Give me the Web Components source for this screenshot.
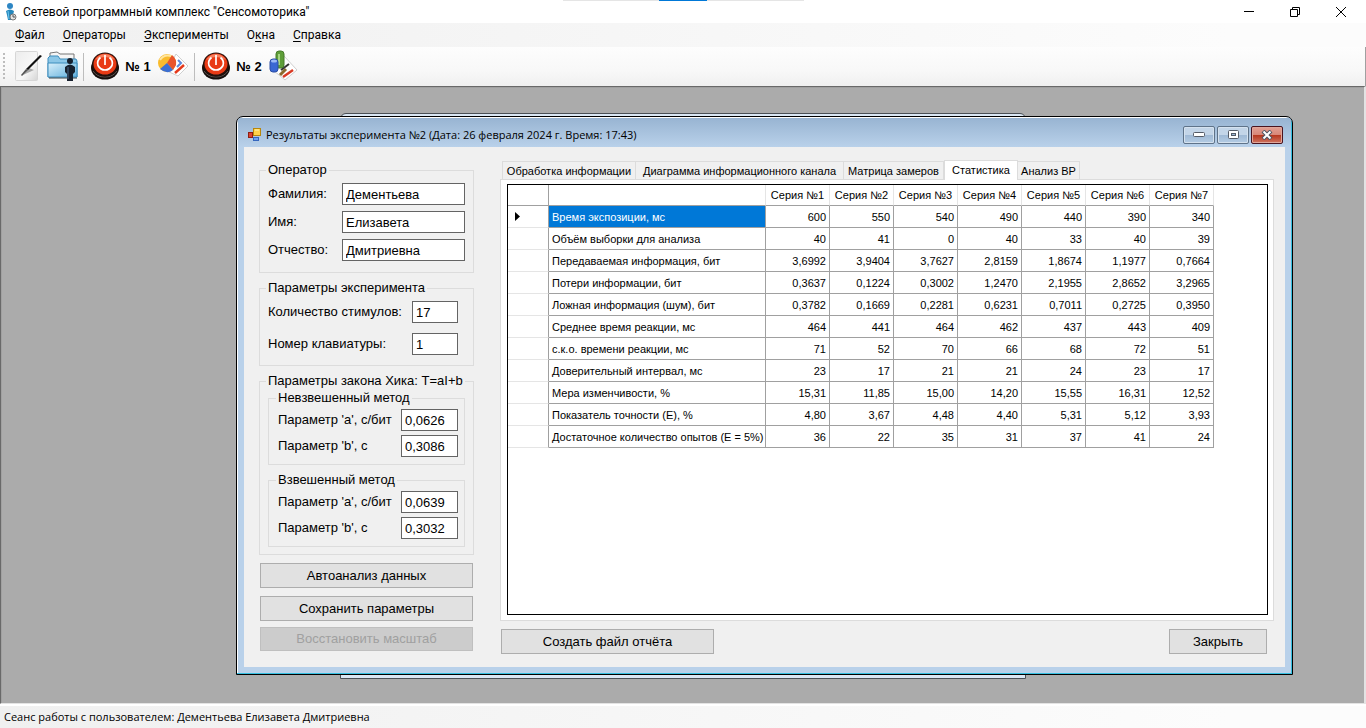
<!DOCTYPE html>
<html lang="ru">
<head>
<meta charset="utf-8">
<title>Сетевой программный комплекс "Сенсомоторика"</title>
<style>
html, body { margin: 0; height: 100%; }
body { font: 12px/16px Roboto, "Noto Sans", sans-serif; color: #000; background: #fff; }
</style>
</head>
<body>
<sm-app></sm-app>
<script>
const define = (name, html, setup) => {
  const template = document.createElement('template');
  template.innerHTML = html;
  customElements.define(name, class extends HTMLElement {
    constructor() {
      super();
      this.attachShadow({ mode: 'open' }).append(template.content.cloneNode(true));
    }
    connectedCallback() { if (setup) setup(this, this.shadowRoot); }
  });
};

define('sm-titlebar', `
<style>
:host { display: flex; align-items: center; height: 23px; padding: 0 2px 0 4px; background: #fff; position: relative; }
.title { flex: 1; padding-left: 5px; white-space: nowrap; }
.snap { position: absolute; top: 0; left: 50%; margin-left: -120px; width: 241px; height: 1px; background: linear-gradient(90deg, #e5e5e5 96px, #0078d7 96px 144px, #e5e5e5 144px); }
button { width: 46px; height: 22px; border: 0; padding: 0; background: none; display: grid; place-items: center; }
button svg { display: block; }
</style>
<svg width="14" height="18" viewBox="0 0 14 18"><circle cx="6" cy="3" r="3" fill="#2d86c4"/><path d="M2 8Q6 5 10 8L9 12L8 17H4L3 12Z" fill="#2487bd"/><path d="M4 8L5 16" stroke="#6cc6ee" stroke-width="1"/><circle cx="9" cy="14" r="3" fill="#e3e3e3" stroke="#777"/><path d="M9 12V14H11" stroke="#555" fill="none"/></svg>
<span class="title">Сетевой программный комплекс "Сенсомоторика"</span>
<span class="snap"></span>
<button aria-label="Свернуть"><svg width="10" height="10"><path d="M0 4.500H10" stroke="#000"/></svg></button>
<button aria-label="Восстановить"><svg width="10" height="10"><path d="M.5 2.500H7.500V9.500H.5ZM2.500 2.500V.5H9.500V7.500H7.500" fill="none" stroke="#000"/></svg></button>
<button aria-label="Закрыть"><svg width="10" height="10"><path d="M0 0L10 10M10 0L0 10" stroke="#000"/></svg></button>
`);

define('sm-menubar', `
<style>
:host { display: flex; align-items: center; height: 24px; padding-left: 6px; background: linear-gradient(90deg, #f0f0f0, #fcfcfc 90%); }
a { color: #000; text-decoration: none; padding: 0 9px; white-space: nowrap; }
u { text-underline-offset: 2px; }
</style>
<a href="#"><u>Ф</u>айл</a><a href="#"><u>О</u>ператоры</a><a href="#"><u>Э</u>ксперименты</a><a href="#">О<u>к</u>на</a><a href="#"><u>С</u>правка</a>
`);

define('sm-power', `
<style>:host { display: block; } svg { display: block; }</style>
<svg width="28" height="28" viewBox="0 0 28 28"><ellipse cx="14" cy="16" rx="14" ry="11.500" fill="#160e0c"/><path d="M2 19Q6 25 14 25T26 19" stroke="#5b5450" fill="none"/><ellipse cx="14" cy="12.500" rx="13" ry="12" fill="#25100b"/><ellipse cx="14" cy="12" rx="11.500" ry="10.500" fill="#e93a15"/><path d="M4 8Q8 2 14 2T24 8Q19 5 14 5T4 8Z" fill="#ff9c7e" opacity=".7"/><path d="M9.500 5.500Q5.500 9 7 13.500Q9.500 18 14 18T21 13.500Q22.500 9 18.500 5.500M14 3V13" stroke="#fff" stroke-width="1.700" fill="none"/></svg>
`);

define('sm-toolbar', `
<style>
:host { display: flex; align-items: center; height: 39px; padding-left: 3px; background: linear-gradient(#fdfdfd, #f8f8f8 60%, #f0f0f0); border-right: 1px solid #a0a0a0; }
.grip { width: 2px; height: 28px; margin-right: 7px; background: repeating-linear-gradient(#bdbdbd 0 2px, transparent 2px 4px); }
button { border: 0; padding: 0 0 2px; background: none; height: 38px; display: grid; place-items: center; }
button svg { display: block; }
.wide { width: 34px; }
.sep { width: 1px; height: 28px; background: #bdbdbd; margin: 0 7px 0 3px; }
b { width: 38px; text-align: center; white-space: nowrap; font: bold 13px/16px "Liberation Sans", sans-serif; }
</style>
<span class="grip"></span>
<button class="wide" aria-label="Запись"><svg width="30" height="32" viewBox="0 0 30 32"><defs><linearGradient id="p" x2="1" y2="1"><stop stop-color="#ececec"/><stop offset=".6" stop-color="#f8f8f8"/><stop offset="1" stop-color="#d4d4d4"/></linearGradient></defs><rect x="1.500" y="1.500" width="22" height="29" rx="1" fill="url(#p)" stroke="#d6d6d6"/><path d="M9 25L20 20L15 18Z" fill="#aaa"/><path d="M26 5L28 6L14 20L12 19Z" fill="#111"/><path d="M12 19L14 20L8 26L7 25Z" fill="#555"/></svg></button>
<button class="wide" aria-label="Операторы"><svg width="32" height="32" viewBox="0 0 32 32"><defs><linearGradient id="f" y2="1"><stop stop-color="#d9f0fb"/><stop offset="1" stop-color="#5faedb"/></linearGradient></defs><path d="M3 8V3L10 2L13 4H27V10" fill="#f5f5f5" stroke="#777"/><path d="M1 27V8L3 6H11L13 9H29L30 11V27Z" fill="#8cc7e7" stroke="#3c8dbd"/><path d="M1 27V13H30V27Z" fill="url(#f)" stroke="#3c8dbd"/><path d="M2 28H30" stroke="#37474f"/><circle cx="23" cy="11" r="3" fill="#17202d"/><path d="M18 17Q23 12 28 17V22L26 24V31H20V24L18 22Z" fill="#17202d"/><path d="M21 17V29" stroke="#4a6485"/></svg></button>
<span class="sep"></span>
<button aria-label="Эксперимент 1"><sm-power></sm-power></button><b>№ 1</b>
<button class="wide" aria-label="Диаграмма 1"><svg width="32" height="30" viewBox="0 0 32 30"><path d="M18 3L30 15L20 25L9 20Z" fill="#fff" stroke="#cfcfcf"/><path d="M17 22L26 14" stroke="#e5391b" stroke-width="2.500"/><path d="M20 9L23 12L19 16" stroke="#5c87d9" stroke-width="2" fill="none"/><circle cx="9" cy="12" r="9" fill="#f9bb2d"/><path d="M9 12L14 4Q19 8 18 14L15 19Z" fill="#e9542b"/><path d="M9 12L15 19Q9 24 2 18Z" fill="#3c6fd2"/><path d="M2 9Q6 3 13 5" stroke="#ffe6a0" fill="none" stroke-width="2"/></svg></button>
<span class="sep"></span>
<button aria-label="Эксперимент 2"><sm-power></sm-power></button><b>№ 2</b>
<button class="wide" aria-label="Диаграмма 2"><svg width="32" height="32" viewBox="0 0 32 32"><path d="M15 6L28 20L16 30L4 20Z" fill="#fff" stroke="#cfcfcf"/><path d="M11 25L17 19" stroke="#8b6b2d" stroke-width="3"/><path d="M14 27L24 20" stroke="#d93a24" stroke-width="2.500"/><path d="M12 20L20 14" stroke="#333" stroke-width="2"/><rect x="7" y="1" width="8" height="17" rx="3" fill="#5e9e38" stroke="#467b2a"/><path d="M10 4V15" stroke="#a6d582" stroke-width="2"/><rect x="1" y="9" width="8" height="13" rx="3" fill="#3a67d3" stroke="#2b4ea5"/><ellipse cx="5" cy="11" rx="3" ry="1.500" fill="#9bb9f5"/></svg></button>
`);

define('sm-statusbar', `
<style>:host { display: flex; align-items: center; min-height: 22px; border-top: 2px solid #fff; padding-left: 4px; background: linear-gradient(90deg, #f0f0f0, #fcfcfc 90%); font: 11px/16px "Open Sans", "Noto Sans", sans-serif; }</style>
<span><slot></slot></span>
`);

define('sm-window', `
<style>
:host { display: flex; flex-direction: column; box-sizing: border-box; border: 1px solid #000; border-radius: 7px 7px 0 0; overflow: hidden; background: #b9d1ea; box-shadow: inset -1px -1px #34bfe0, inset 1px 1px #fff; padding: 0 7px 7px; }
header { display: flex; align-items: center; height: 29px; margin: 1px -6px 0; padding: 0 8px 0 10px; background: linear-gradient(#98b4d2, #b9d1ea); gap: 2px; }
h1 { font: 11px/16px "Open Sans", "Noto Sans", sans-serif; margin: 0 0 0 2px; flex: 1; white-space: nowrap; }
header > svg { margin: 5px 0 0; }
h1, .btns { padding-top: 5px; }
.btns { display: flex; gap: 2px; }
button { width: 32px; height: 18px; box-sizing: border-box; padding: 0; border: 1px solid #5f7389; border-radius: 2px; background: linear-gradient(#c3d5e8 50%, #9fb9d5 50%, #b4cce4); box-shadow: inset 0 0 0 1px #d5e2ef; display: grid; place-items: center; }
button.close { border-color: #4a1420; background: linear-gradient(#e2a095, #d88677 50%, #b5351d 50%, #cf7460); box-shadow: inset 0 0 0 1px #e0a79b; }
main { flex: 1; background: #f0f0f0; display: flex; flex-direction: column; }
</style>
<header>
<svg width="14" height="14" viewBox="0 0 14 14"><rect x="5.500" y=".5" width="7" height="7" fill="#ffd24b" stroke="#b8860b"/><path d="M7 2H11" stroke="#fff3b5"/><rect x=".5" y="4.500" width="4" height="5" fill="#d94432" stroke="#8f1d12"/><rect x="5.500" y="9.500" width="5" height="3" fill="#6fa3ef" stroke="#3566bd"/></svg>
<h1><slot name="title"></slot></h1>
<div class="btns">
<button aria-label="Свернуть"><svg width="12" height="6"><rect x=".5" y=".5" width="11" height="4" rx="1" fill="#fff" stroke="#545b66"/></svg></button>
<button aria-label="Развернуть"><svg width="11" height="10"><rect x=".5" y=".5" width="10" height="8" rx="1" fill="#fff" stroke="#545b66"/><rect x="3.500" y="3.500" width="4" height="2" fill="#9db8d6" stroke="#545b66"/></svg></button>
<button class="close" aria-label="Закрыть"><svg width="12" height="10" viewBox="0 0 12 10"><path d="M2 1L10 9M10 1L2 9" stroke="#4b5563" stroke-width="4"/><path d="M2.500 1.500L9.500 8.500M9.500 1.500L2.500 8.500" stroke="#fff" stroke-width="2"/></svg></button>
</div>
</header>
<main><slot></slot></main>
`);

define('sm-group', `
<style>
:host { display: block; font: 13px/16px "Liberation Sans", sans-serif; }
fieldset { margin: 0; min-width: 0; border: 1px solid #dcdcdc; padding: var(--pad, 5px 8px 11px); }
legend { margin-left: -2px; padding: 0 2px; white-space: nowrap; height: 16px; }
.rows { display: flex; flex-direction: column; gap: var(--gap, 6px); }
</style>
<fieldset><legend></legend><div class="rows"><slot></slot></div></fieldset>
`, (el, root) => { root.querySelector('legend').textContent = el.getAttribute('label'); });

define('sm-field', `
<style>
:host { display: flex; align-items: center; justify-content: space-between; }
label { white-space: nowrap; }
input { width: var(--w, 123px); height: 22px; box-sizing: border-box; border: 1px solid #646464; border-radius: 0; padding: 1px 3px 0; background: #fff; font: inherit; color: #000; }
</style>
<label for="i"></label><input id="i" type="text">
`, (el, root) => {
  root.querySelector('label').textContent = el.getAttribute('label');
  root.querySelector('input').value = el.getAttribute('value');
});

define('sm-button', `
<style>
:host { display: block; }
button { display: block; width: 100%; height: 25px; box-sizing: border-box; border: 1px solid #adadad; border-radius: 0; background: #e1e1e1; color: #000; padding: 0; font: 13px/16px "Liberation Sans", sans-serif; }
button:disabled { background: #ccc; border-color: #bfbfbf; color: #a0a0a0; height: 24px; }
</style>
<button><slot></slot></button>
`, (el, root) => { root.querySelector('button').disabled = el.hasAttribute('disabled'); });

define('sm-tabs', `
<style>
:host { display: flex; flex-direction: column; font: 11px/14px "Liberation Sans", sans-serif; }
nav { display: flex; align-items: flex-end; height: 20px; padding-left: 2px; position: relative; z-index: 1; }
button { flex: none; height: 18px; margin-bottom: 1px; box-sizing: border-box; border: 1px solid #dcdcdc; border-width: 1px 1px 0 0; background: #f0f0f0; font: inherit; color: #000; padding: 0; white-space: nowrap; }
button:first-child { border-left-width: 1px; }
button.on { height: 20px; margin-bottom: 0; background: #fff; border-left-width: 1px; padding-bottom: 2px; }
.panel { flex: 1; display: flex; border: 1px solid #dcdcdc; background: #fff; padding: 4px 5px 5px 6px; margin-top: -1px; }
::slotted(*) { flex: 1; }
</style>
<nav role="tablist"></nav><div class="panel"><slot></slot></div>
`, (el, root) => {
  const tabs = [['Обработка информации', 134], ['Диаграмма информационного канала', 208], ['Матрица замеров', 100], ['Статистика', 74, true], ['Анализ ВР', 62]];
  root.querySelector('nav').innerHTML = tabs.map(([t, w, on]) =>
    `<button role="tab" style="width:${w}px" class="${on ? 'on' : ''}" aria-selected="${!!on}">${t}</button>`).join('');
});

define('sm-grid', `
<style>
:host { display: block; border: 1px solid #000; background: #fff; font: 11px/14px "Liberation Sans", sans-serif; }
table { border-collapse: separate; border-spacing: 0; table-layout: fixed; width: 706px; }
col.mark { width: 41px; } col.name { width: 217px; } col.num { width: 64px; }
th, td { box-sizing: border-box; padding: 0 3px; font-weight: normal; white-space: nowrap; border: 0 solid #a0a0a0; border-width: 0 1px 1px 0; height: 22px; }
thead th { height: 21px; border-right-color: #e5e5e5; padding: 0; }
thead th:first-child { border-right-color: #a0a0a0; }
tbody th.mark { border-bottom-color: #e5e5e5; text-align: left; padding-left: 7px; }
tbody th.name { text-align: left; }
td { text-align: right; }
tr.sel .name { background: #0078d7; color: #fff; }
th.mark, th.mark { border-right-color: #a0a0a0; }
svg { display: block; }
</style>
<table><colgroup><col class="mark"><col class="name"><col class="num" span="7"></colgroup><thead></thead><tbody></tbody></table>
`, (el, root) => {
  const rows = [
    ['Время экспозиции, мс', 600, 550, 540, 490, 440, 390, 340],
    ['Объём выборки для анализа', 40, 41, 0, 40, 33, 40, 39],
    ['Передаваемая информация, бит', '3,6992', '3,9404', '3,7627', '2,8159', '1,8674', '1,1977', '0,7664'],
    ['Потери информации, бит', '0,3637', '0,1224', '0,3002', '1,2470', '2,1955', '2,8652', '3,2965'],
    ['Ложная информация (шум), бит', '0,3782', '0,1669', '0,2281', '0,6231', '0,7011', '0,2725', '0,3950'],
    ['Среднее время реакции, мс', 464, 441, 464, 462, 437, 443, 409],
    ['с.к.о. времени реакции, мс', 71, 52, 70, 66, 68, 72, 51],
    ['Доверительный интервал, мс', 23, 17, 21, 21, 24, 23, 17],
    ['Мера изменчивости, %', '15,31', '11,85', '15,00', '14,20', '15,55', '16,31', '12,52'],
    ['Показатель точности (E), %', '4,80', '3,67', '4,48', '4,40', '5,31', '5,12', '3,93'],
    ['Достаточное количество опытов (E = 5%)', 36, 22, 35, 31, 37, 41, 24]
  ];
  const arrow = '<svg width="5" height="9"><path d="M0 0L5 4.500L0 9Z"/></svg>';
  root.querySelector('thead').innerHTML = '<tr><th></th><th></th>' + [1, 2, 3, 4, 5, 6, 7].map(n => `<th scope="col">Серия №${n}</th>`).join('') + '</tr>';
  root.querySelector('tbody').innerHTML = rows.map(([name, ...v], i) =>
    `<tr class="${i ? '' : 'sel'}"><th class="mark">${i ? '' : arrow}</th><th class="name" scope="row">${name}</th>${v.map(x => `<td>${x}</td>`).join('')}</tr>`).join('');
});

define('sm-results', `
<style>
:host { flex: 1; display: grid; grid-template-columns: 215px 1fr; gap: 26px; padding: 13px 11px 13px 15px; }
.left { display: flex; flex-direction: column; gap: 7px; padding-top: 2px; }
.right { display: flex; flex-direction: column; gap: 8px; }
.two { --w: 46px; --pad: 5px 15px 10px 8px; --gap: 10px; }
.law { --w: 57px; --pad: 1px 8px 7px; --gap: 7px; }
.law sm-group { --pad: 3px 6px 7px 9px; --gap: 4px; }
.actions { display: flex; flex-direction: column; gap: 8px; padding: 1px 1px 0; }
.actions sm-button[disabled] { margin-top: -2px; }
.foot { display: flex; justify-content: space-between; padding: 0 7px 0 1px; }
.report { width: 213px; } .close { width: 98px; }
sm-tabs { flex: 1; }
</style>
<div class="left">
<sm-group label="Оператор"><sm-field label="Фамилия:" value="Дементьева"></sm-field><sm-field label="Имя:" value="Елизавета"></sm-field><sm-field label="Отчество:" value="Дмитриевна"></sm-field></sm-group>
<sm-group class="two" label="Параметры эксперимента"><sm-field label="Количество стимулов:" value="17"></sm-field><sm-field label="Номер клавиатуры:" value="1"></sm-field></sm-group>
<sm-group class="law" label="Параметры закона Хика: T=aI+b">
<sm-group label="Невзвешенный метод"><sm-field label="Параметр 'a', с/бит" value="0,0626"></sm-field><sm-field label="Параметр 'b', с" value="0,3086"></sm-field></sm-group>
<sm-group label="Взвешенный метод"><sm-field label="Параметр 'a', с/бит" value="0,0639"></sm-field><sm-field label="Параметр 'b', с" value="0,3032"></sm-field></sm-group>
</sm-group>
<div class="actions"><sm-button>Автоанализ данных</sm-button><sm-button>Сохранить параметры</sm-button><sm-button disabled>Восстановить масштаб</sm-button></div>
</div>
<div class="right">
<sm-tabs><sm-grid></sm-grid></sm-tabs>
<div class="foot"><sm-button class="report">Создать файл отчёта</sm-button><sm-button class="close">Закрыть</sm-button></div>
</div>
`);

define('sm-app', `
<style>
:host { display: flex; flex-direction: column; min-height: 100vh; }
.desk { flex: 1; position: relative; min-height: 600px; background: #ababab; border: 1px solid #696969; border-width: 1px 2px 1px 1px; border-right-color: #e3e3e3; border-bottom-color: #e3e3e3; box-shadow: inset 1px 1px #a0a0a0; }
.behind { position: absolute; left: 339px; top: 26px; width: 686px; height: 566px; box-sizing: border-box; border: 1px solid #4a4f55; border-radius: 6px 6px 0 0; background: #dbe7f4; }
sm-window { position: absolute; left: 235px; top: 29px; width: 1057px; height: 559px; }
</style>
<sm-titlebar></sm-titlebar>
<sm-menubar></sm-menubar>
<sm-toolbar></sm-toolbar>
<div class="desk">
<div class="behind"></div>
<sm-window><span slot="title">Результаты эксперимента №2 (Дата: 26 февраля 2024 г. Время: 17:43)</span><sm-results></sm-results></sm-window>
</div>
<sm-statusbar>Сеанс работы с пользователем: Дементьева Елизавета Дмитриевна</sm-statusbar>
`);
</script>
</body>
</html>
